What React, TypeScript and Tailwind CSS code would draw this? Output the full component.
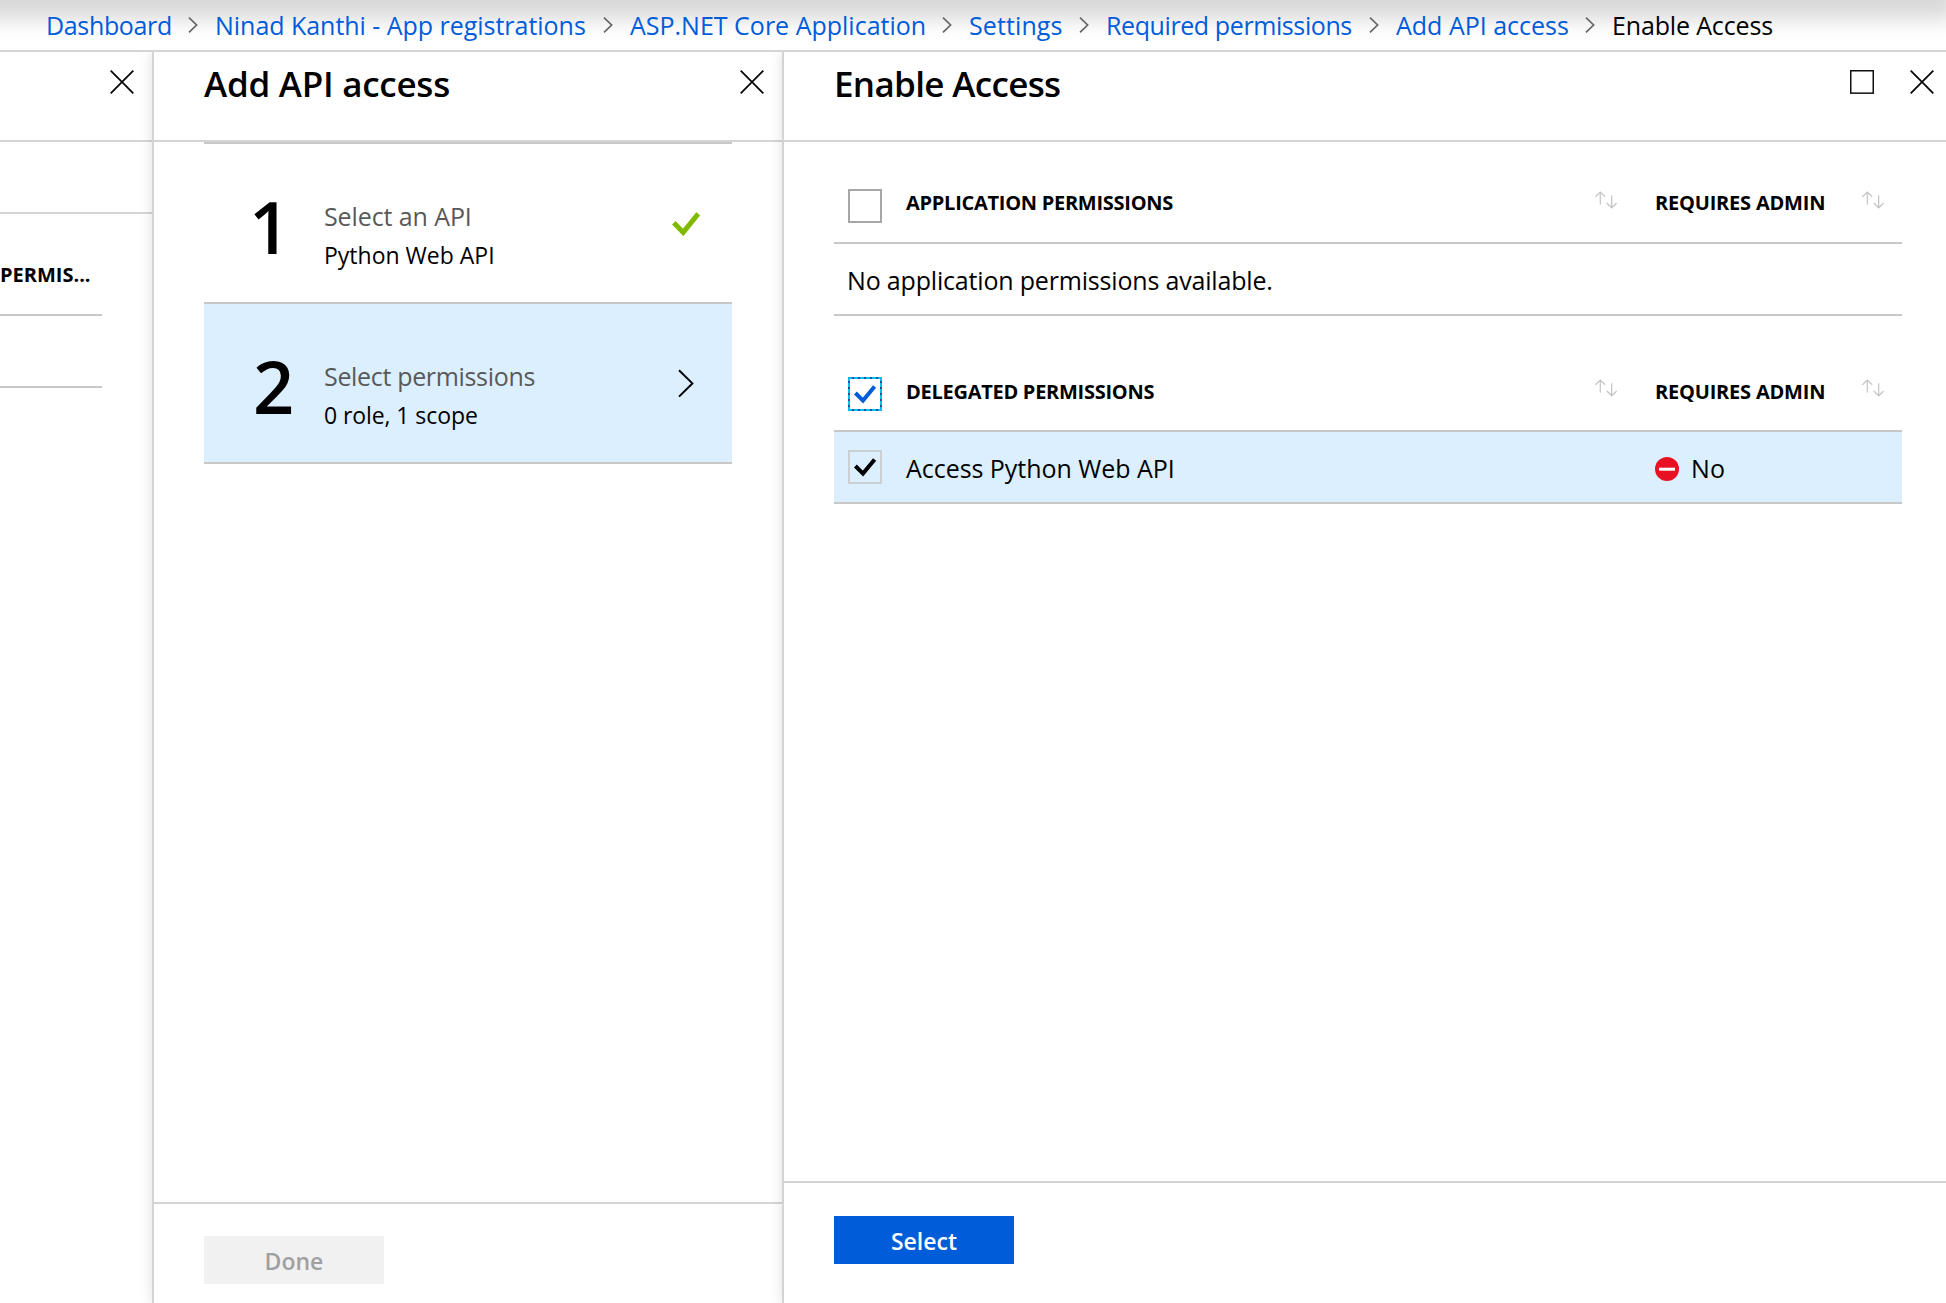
type Crumb = { label: string; box: string; current?: boolean };

const crumbs: Crumb[] = [
  { label: "Dashboard", box: "w-[169px] tracking-[-0.35px]" },
  { label: "Ninad Kanthi - App registrations", box: "w-[415px] tracking-[-0.03px]" },
  { label: "ASP.NET Core Application", box: "w-[339px]" },
  { label: "Settings", box: "w-[137px] tracking-[0.1px]" },
  { label: "Required permissions", box: "w-[290px] tracking-[-0.4px]" },
  { label: "Add API access", box: "w-[216px]" },
  { label: "Enable Access", box: "tracking-[-0.15px]", current: true },
];

function CrumbChevron() {
  return (
    <svg className="mr-[17px] h-[16px] w-[10px] shrink-0" viewBox="0 0 10 16" fill="none">
      <path d="M1 0.7 L8.6 8 L1 15.3" stroke="#666" strokeWidth="1.7" />
    </svg>
  );
}

function CloseIcon() {
  return (
    <svg className="h-6 w-6 shrink-0" viewBox="0 0 24 24" fill="none">
      <path d="M0.7 0.7 L23.3 23.3 M23.3 0.7 L0.7 23.3" stroke="#000" strokeWidth="1.7" />
    </svg>
  );
}

function MaximizeIcon() {
  return (
    <svg className="h-6 w-6 shrink-0" viewBox="0 0 24 24" fill="none">
      <rect x="0.75" y="0.75" width="22.5" height="22.4" stroke="#111" strokeWidth="1.5" />
    </svg>
  );
}

function SortIcon() {
  return (
    <svg className="h-[18px] w-[22px] shrink-0" viewBox="0 0 22 18" fill="none" stroke="#c4c4c4" strokeWidth="1.2">
      <path d="M5.3 13.5 V1.2 M0.4 5.8 L5.3 1 L10.2 5.8" />
      <path d="M16.7 4.2 V16.6 M11.8 12 L16.7 16.8 L21.6 12" />
    </svg>
  );
}

function Checkbox({ state }: { state: "empty" | "focused" | "checked" }) {
  return (
    <svg className="h-[34px] w-[34px] shrink-0" viewBox="0 0 34 34" fill="none">
      {state === "empty" && <rect x="1" y="1" width="32" height="32" fill="#fff" stroke="#a6a6a6" strokeWidth="2" />}
      {state === "checked" && <rect x="1" y="1" width="32" height="32" stroke="#cccfd2" strokeWidth="2" />}
      {state === "focused" && (
        <>
          <rect x="1" y="1" width="32" height="32" fill="#fff" stroke="#00bcf2" strokeWidth="2" />
          <path d="M4 1 H34 M4 33 H34 M1 4 V34 M33 4 V34" stroke="#15569c" strokeWidth="2" strokeDasharray="2 4" />
        </>
      )}
      {state !== "empty" && (
        <path d="M7.4 16 L15 23.6 L26.6 9.4" stroke={state === "focused" ? "#015cda" : "#000"} strokeWidth="4" />
      )}
    </svg>
  );
}

function BlockedIcon() {
  return (
    <svg className="h-6 w-6 shrink-0" viewBox="0 0 24 24">
      <circle cx="12" cy="12" r="12" fill="#e81123" />
      <rect x="4" y="10.7" width="16" height="3" fill="#fff" />
    </svg>
  );
}

function Step({ n, title, value, active }: { n: string; title: string; value: string; active?: boolean }) {
  return (
    <div
      className={
        active
          ? "flex h-[160px] border-b-2 border-[#c8c8c8] bg-[#dcefff]"
          : "flex h-[162px] border-y-2 border-[#c8c8c8]"
      }
    >
      <div
        className={
          active
            ? "w-[120px] pt-[46px] pl-[49px] text-[72px] leading-[72px] font-semibold"
            : "w-[120px] pt-[46px] pl-[45px] text-[72px] leading-[72px] font-semibold"
        }
      >
        {n}
      </div>
      <div className="grow pt-[52px]">
        <div
          className={
            active
              ? "text-[25px] leading-[40px] tracking-[-0.33px] text-[#595959]"
              : "text-[25px] leading-[40px] tracking-[-0.1px] text-[#595959]"
          }
        >
          {title}
        </div>
        <div className={active ? "text-[23px] leading-[38px] tracking-[-0.08px]" : "text-[23px] leading-[38px]"}>
          {value}
        </div>
      </div>
      {active ? (
        <svg className="mt-[65px] mr-[38px] h-[29px] w-[16px]" viewBox="0 0 16 29" fill="none">
          <path d="M1 1.2 L14.4 14.4 L1 27.6" stroke="#000" strokeWidth="2" />
        </svg>
      ) : (
        <svg className="mt-[68px] mr-[32px] h-[24px] w-[28px]" viewBox="0 0 28 24" fill="none">
          <path d="M1.8 10.8 L11.2 20.4 L26.2 1.8" stroke="#7fba00" strokeWidth="5" />
        </svg>
      )}
    </div>
  );
}

function TableHead({ label, focused }: { label: string; focused?: boolean }) {
  return (
    <div className="flex h-[102px] items-start border-b-2 border-[#c8c8c8] pl-[14px] text-[20px] leading-[20px] font-bold">
      <div className="pt-[47px]">
        <Checkbox state={focused ? "focused" : "empty"} />
      </div>
      <div
        className={
          focused ? "grow pt-[52px] pl-[24px] tracking-[-0.27px]" : "grow pt-[51px] pl-[24px] tracking-[-0.27px]"
        }
      >
        {label}
      </div>
      <div className="pt-[49px]">
        <SortIcon />
      </div>
      <div
        className={
          focused ? "w-[245px] pt-[52px] pl-[38px] tracking-[-0.2px]" : "w-[245px] pt-[51px] pl-[38px] tracking-[-0.2px]"
        }
      >
        REQUIRES ADMIN
      </div>
      <div className="pt-[49px] pr-[18px]">
        <SortIcon />
      </div>
    </div>
  );
}

export default function App() {
  return (
    <div className="flex h-[1303px] w-[1946px] flex-col overflow-hidden bg-white font-['Open_Sans',sans-serif] text-black">
      <nav className="relative h-[52px] shrink-0 overflow-hidden border-b-2 border-[#d4d4d4]">
        <div className="absolute -top-20 -left-10 h-20 w-[1996px] shadow-[0_19px_20px_rgba(0,0,0,0.155)]" />
        <ol className="relative flex h-[50px] items-center pl-[46px] text-[25px] leading-[50px] whitespace-nowrap">
          {crumbs.map((c) => (
            <li key={c.label} className={"flex items-center justify-between " + c.box}>
              <a className={c.current ? "text-black" : "text-[#015cda]"}>{c.label}</a>
              {!c.current && <CrumbChevron />}
            </li>
          ))}
        </ol>
      </nav>

      <main className="flex grow overflow-hidden">
        <section className="w-[152px] shrink-0">
          <header className="flex h-[90px] justify-end border-b-2 border-[#d4d4d4] pt-[18px] pr-[18px]">
            <CloseIcon />
          </header>
          <div className="h-[72px] border-b-2 border-[#d4d4d4]" />
          <div className="h-[102px] w-[102px] border-b-2 border-[#c8c8c8] pt-[51px] text-[20px] leading-[20px] font-bold">
            PERMIS...
          </div>
          <div className="h-[72px] w-[102px] border-b-2 border-[#c8c8c8]" />
        </section>

        <section className="relative flex w-[630px] shrink-0 flex-col border-l-2 border-[#d4d4d4] bg-white shadow-[0_0_12px_rgba(0,0,0,0.13)]">
          <header className="flex h-[90px] shrink-0 justify-between border-b-2 border-[#d4d4d4] pr-[18px] pl-[50px]">
            <h2 className="text-[35px] leading-[64px] font-semibold tracking-[-0.26px]">Add API access</h2>
            <div className="pt-[18px]">
              <CloseIcon />
            </div>
          </header>
          <div className="grow pr-[50px] pl-[50px]">
            <Step n="1" title="Select an API" value="Python Web API" />
            <Step n="2" title="Select permissions" value="0 role, 1 scope" active />
          </div>
          <footer className="h-[101px] shrink-0 border-t-2 border-[#d4d4d4] pt-[32px] pl-[50px]">
            <button className="block h-[48px] w-[180px] bg-[#f1f1f1] pt-[3px] text-[23px] leading-[45px] font-semibold text-[#a0a0a0]">
              Done
            </button>
          </footer>
        </section>

        <section className="relative flex grow flex-col border-l-2 border-[#d4d4d4] bg-white shadow-[0_0_12px_rgba(0,0,0,0.13)]">
          <header className="flex h-[90px] shrink-0 border-b-2 border-[#d4d4d4] pr-[12px] pl-[50px]">
            <h2 className="grow text-[35px] leading-[64px] font-semibold tracking-[-0.66px]">Enable Access</h2>
            <div className="flex gap-9 pt-[18px]">
              <MaximizeIcon />
              <CloseIcon />
            </div>
          </header>
          <div className="grow pr-[44px] pl-[50px]">
            <TableHead label="APPLICATION PERMISSIONS" />
            <div className="h-[72px] border-b-2 border-[#c8c8c8] pl-[13px] text-[25px] leading-[72px] tracking-[-0.18px]">
              No application permissions available.
            </div>
            <div className="h-[14px]" />
            <TableHead label="DELEGATED PERMISSIONS" focused />
            <div className="flex h-[72px] items-center border-b-2 border-[#c8c8c8] bg-[#dcefff] pl-[14px] text-[25px] leading-[70px]">
              <Checkbox state="checked" />
              <div className="grow pt-[2px] pl-[24px] leading-[68px] tracking-[-0.04px]">Access Python Web API</div>
              <div className="flex w-[247px] items-center pt-[3px] leading-[67px]">
                <BlockedIcon />
                <span className="pl-[12px] tracking-[0.3px]">No</span>
              </div>
            </div>
          </div>
          <footer className="h-[122px] shrink-0 border-t-2 border-[#d4d4d4] pt-[33px] pl-[50px]">
            <button className="block h-[48px] w-[180px] bg-[#015cda] pt-[3px] text-[23px] leading-[45px] font-semibold text-white">
              Select
            </button>
          </footer>
        </section>
      </main>
    </div>
  );
}
